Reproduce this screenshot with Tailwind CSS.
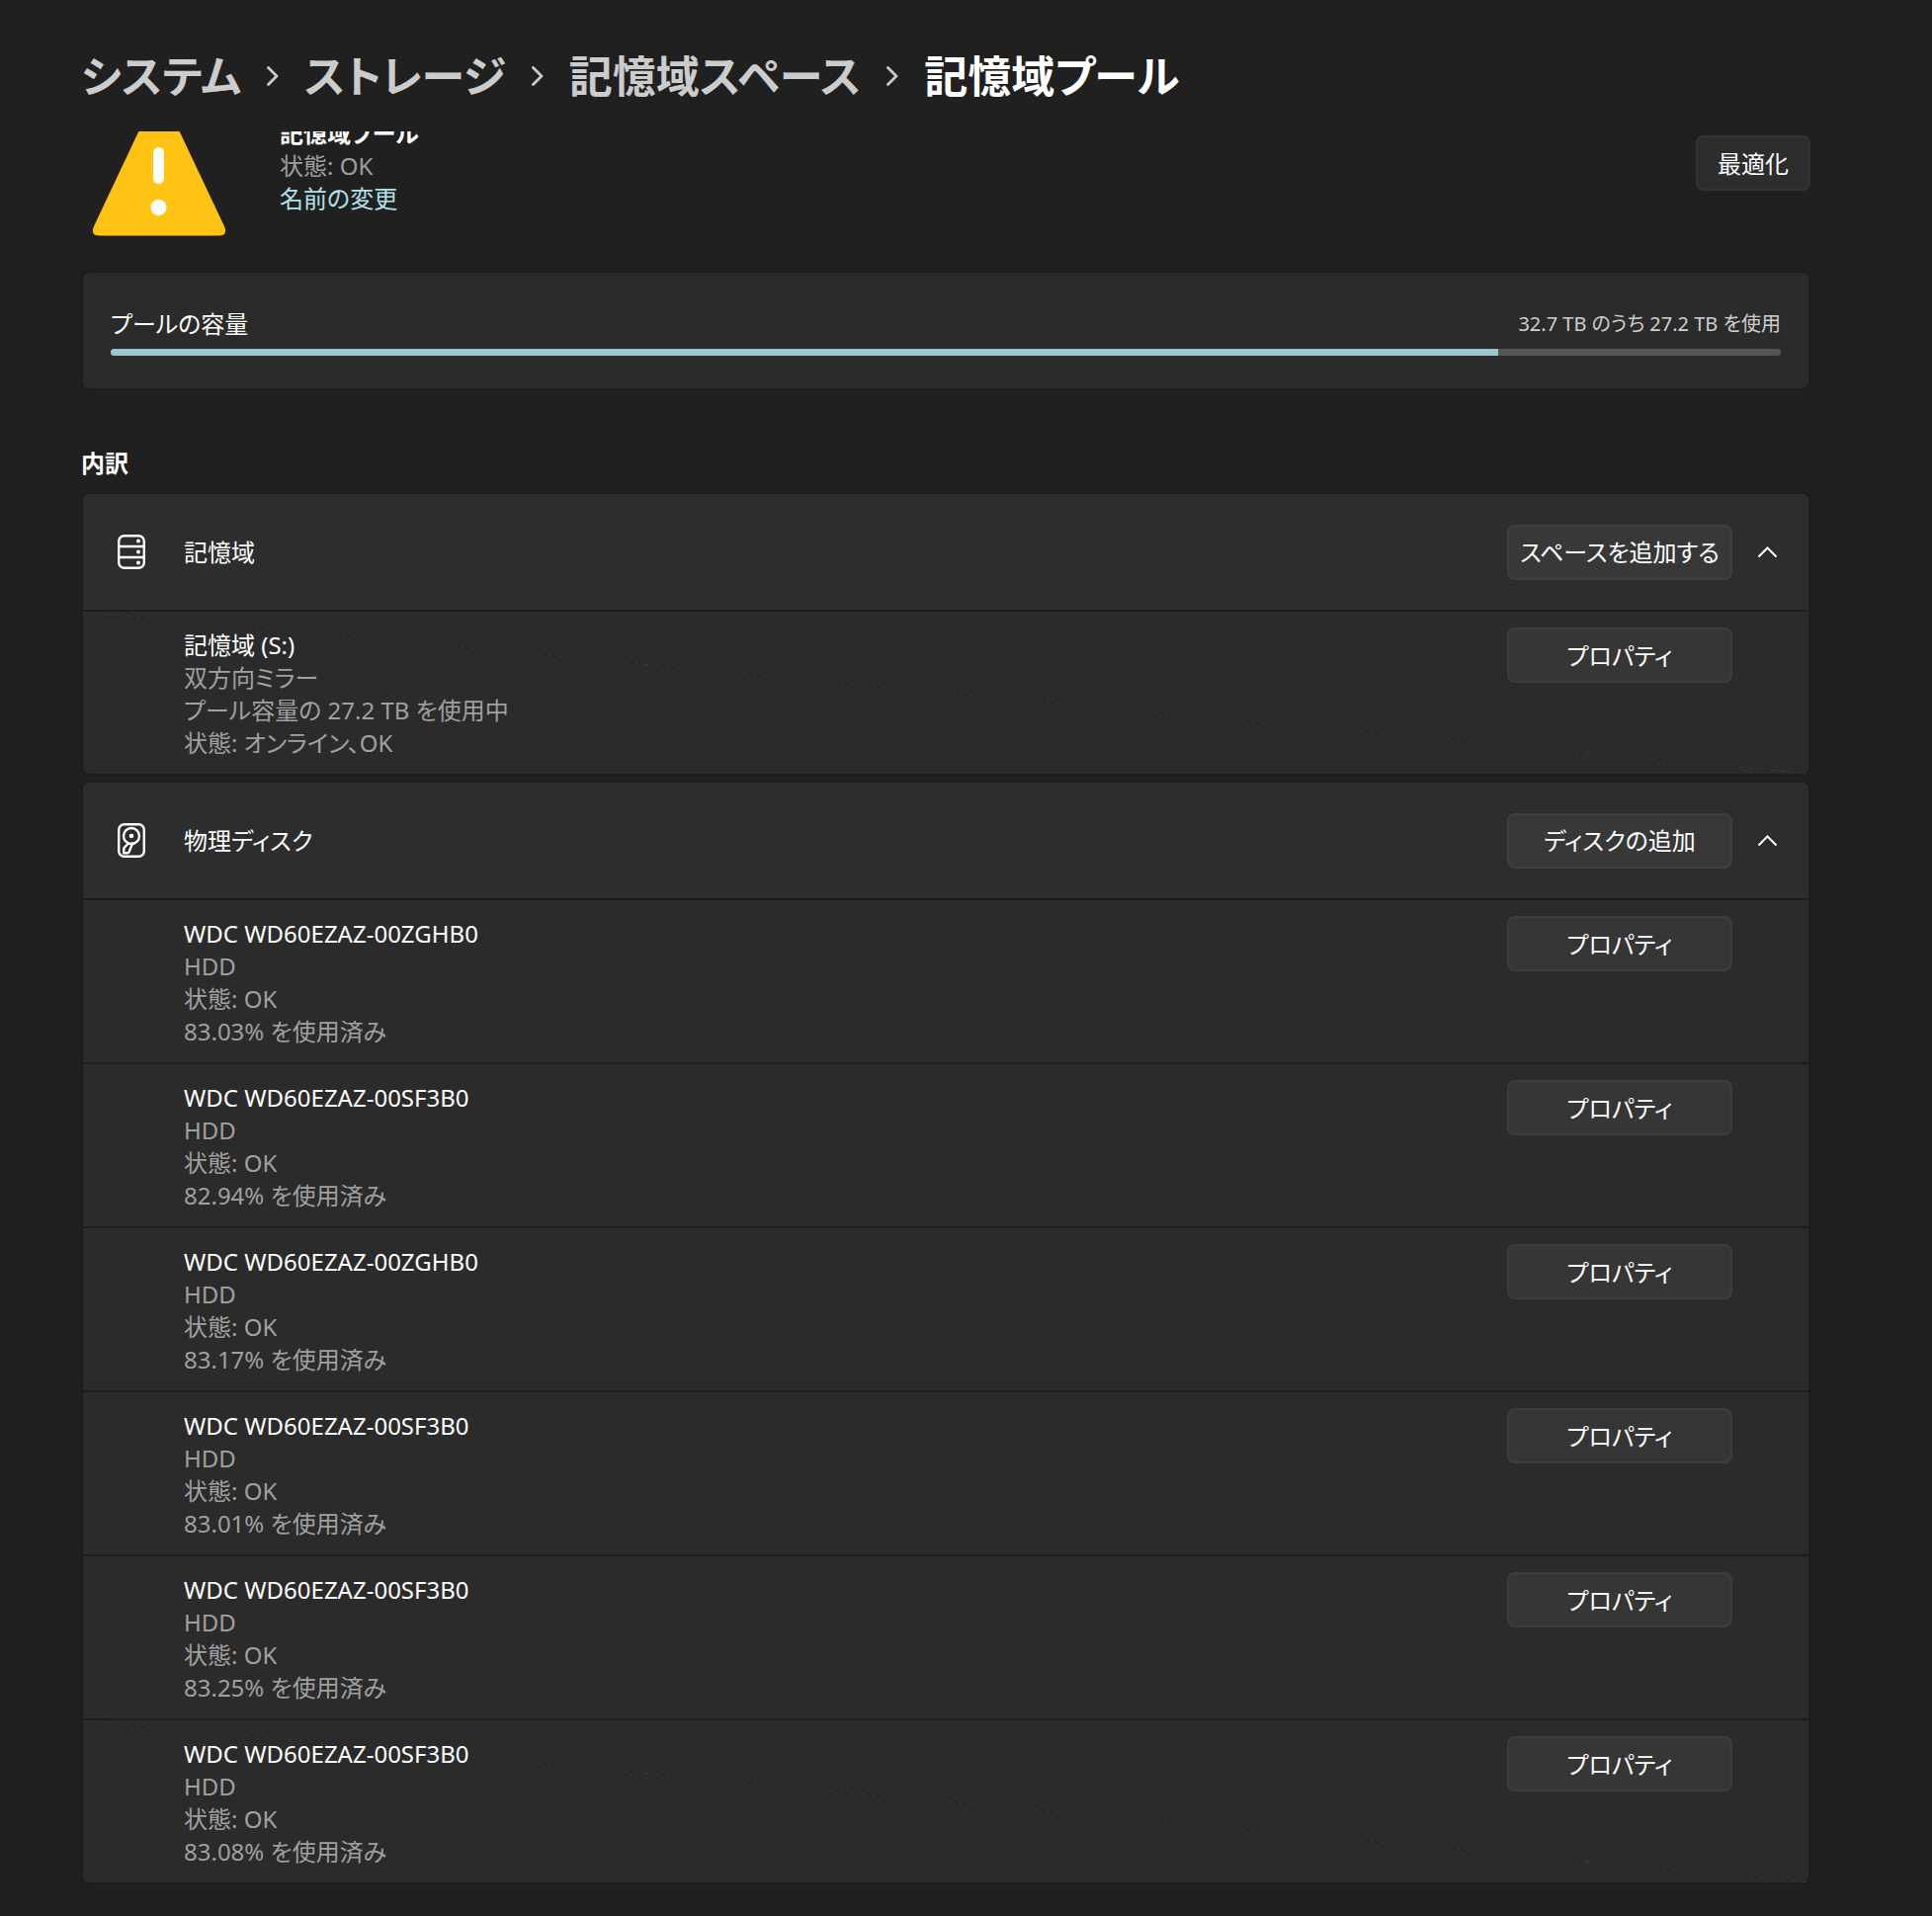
<!DOCTYPE html>
<html lang="ja">
  <head>
    <meta charset="UTF-8" />
    <meta name="viewport" content="width=device-width, initial-scale=1.0" />
    <title>記憶域プール</title>
    <script src="https://cdn.jsdelivr.net/npm/@tailwindcss/browser@4"></script>
  </head>
  <body class="min-h-screen bg-[#202020] pr-[123px] pl-[82px] font-['Noto_Sans','Noto_Sans_CJK_JP',sans-serif] text-[24px] leading-[33px] text-white [font-feature-settings:'palt']">

    <!-- breadcrumb -->
    <nav class="flex h-[133px] items-center pt-[20px] text-[44px] leading-[64px] font-semibold whitespace-nowrap text-[#cccccc]">
      <a href="#">システム</a>
      <svg class="mx-[26px] h-[20px] w-[12px]" fill="none" viewBox="0 0 12 20" stroke="currentColor" stroke-width="2.8" stroke-linecap="round" stroke-linejoin="round"><path d="M1.5 1.5 10 10 1.5 18.5" /></svg>
      <a href="#">ストレージ</a>
      <svg class="mx-[26px] h-[20px] w-[12px]" fill="none" viewBox="0 0 12 20" stroke="currentColor" stroke-width="2.8" stroke-linecap="round" stroke-linejoin="round"><path d="M1.5 1.5 10 10 1.5 18.5" /></svg>
      <a href="#">記憶域スペース</a>
      <svg class="mx-[26px] h-[20px] w-[12px]" fill="none" viewBox="0 0 12 20" stroke="currentColor" stroke-width="2.8" stroke-linecap="round" stroke-linejoin="round"><path d="M1.5 1.5 10 10 1.5 18.5" /></svg>
      <h1 class="text-white">記憶域プール</h1>
    </nav>

    <!-- scrolled content, cut off under the breadcrumb -->
    <main class="overflow-hidden">
      <div class="-mt-[15px] flex items-start">
        <svg class="mt-[1px] ml-[11px] h-[120px] w-[136px] overflow-visible" viewBox="0 0 136 120">
          <path d="M62-17Q68-25 74-17L134 110Q138 119.500 128 119.500H8Q-2 119.500 2 110Z" fill="#ffc314" />
          <rect x="62" y="30" width="11" height="37" rx="5.500" fill="#fff" />
          <circle cx="67.500" cy="91" r="8" fill="#fff" />
        </svg>
        <div class="ml-[54px] flex-1">
          <h2 class="font-bold">記憶域プール</h2>
          <p class="text-[#9e9e9e]">状態: OK</p>
          <a href="#" class="text-[#b3e0e8]">名前の変更</a>
        </div>
        <button class="mt-[19px] h-[56px] w-[116px] rounded-[8px] border-2 border-[#333333] bg-[#2d2d2d]">最適化</button>
      </div>

      <section class="mt-[35px] rounded-[8px] border-2 border-[#1d1d1d] bg-[#2b2b2b] px-[28px] pt-[35px] pb-[33px]">
        <div class="flex items-center justify-between">
          <p id="poolLabel">プールの容量</p>
          <p class="text-[20px] text-[#cfcfcf]">32.7 TB のうち 27.2 TB を使用</p>
        </div>
        <div role="progressbar" aria-labelledby="poolLabel" aria-valuenow="83" aria-valuemin="0" aria-valuemax="100" class="mt-[9px] h-[7px] overflow-hidden rounded-full bg-[#555555]">
          <div class="h-full bg-[#9ec5d0]" style="width: 83.1%"></div>
        </div>
      </section>

      <h2 class="mt-[57px] mb-[13px] font-bold">内訳</h2>

      <!-- storage spaces -->
      <section class="rounded-[8px] border-2 border-[#1d1d1d] bg-[#2b2b2b]">
        <div class="flex h-[117px] items-center rounded-t-[6px] bg-[#2d2d2d] pr-[32px] pl-[35px]">
          <svg class="h-[35px] w-[28px]" fill="none" viewBox="0 0 28 35" stroke="white" stroke-width="2.400">
            <rect x="1.200" y="1.200" width="25.600" height="32.600" rx="5.500" />
            <path d="M1 12H27M1 23H27" />
            <g fill="white" stroke="none"><circle cx="21" cy="6.500" r="2" /><circle cx="21" cy="17.500" r="2" /><circle cx="21" cy="28.500" r="2" /></g>
          </svg>
          <h3 class="ml-[39px] flex-1">記憶域</h3>
          <button class="h-[56px] w-[228px] rounded-[8px] border-2 border-[#3f3f3f] bg-[#383838]">スペースを追加する</button>
          <button aria-label="折りたたむ" class="ml-[26px]">
            <svg class="h-[12px] w-[19px]" fill="none" viewBox="0 0 19 12" stroke="white" stroke-width="2"><path d="M.5 10.500 9.500 1.500 18.500 10.500" /></svg>
          </button>
        </div>
        <div class="relative flex items-start border-t-2 border-[#1d1d1d] pt-[16px] pr-[77px] pb-[15px] pl-[102px]">
          <svg class="absolute inset-0 h-full w-full" preserveAspectRatio="none" viewBox="0 0 1746 164" shape-rendering="crispEdges"><path d="M0 0 1746 164" stroke="#3d3d3d" stroke-width="1" stroke-dasharray="2 9" /></svg>
          <div class="relative flex-1 pt-[1px] text-[#a0a0a0]">
            <h4 class="text-white">記憶域 (S:)</h4>
            <p>双方向ミラー</p>
            <p>プール容量の 27.2 TB を使用中</p>
            <p>状態: オンライン、OK</p>
          </div>
          <button class="relative h-[56px] w-[228px] rounded-[8px] border-2 border-[#3d3d3d] bg-[#363636]">プロパティ</button>
        </div>
      </section>

      <!-- physical disks -->
      <section class="mt-[5px] mb-[32px] rounded-[8px] border-2 border-[#1d1d1d] bg-[#2b2b2b]">
        <div class="flex h-[117px] items-center rounded-t-[6px] bg-[#2d2d2d] pr-[32px] pl-[35px]">
          <svg class="h-[35px] w-[28px]" fill="none" viewBox="0 0 28 35" stroke="white" stroke-width="2.400">
            <rect x="1.200" y="1.200" width="25.600" height="32.600" rx="5.500" />
            <circle cx="14" cy="13" r="8" />
            <path d="M15.500 19.500 11.500 29.300Q11 30.300 10 30.300H6.200V26.500Q6.200 25.500 7 24.500L11 20.500" stroke-linejoin="round" />
            <circle cx="14" cy="13" r="2.300" fill="white" stroke="none" />
          </svg>
          <h3 class="ml-[39px] flex-1">物理ディスク</h3>
          <button class="h-[56px] w-[228px] rounded-[8px] border-2 border-[#3f3f3f] bg-[#383838]">ディスクの追加</button>
          <button aria-label="折りたたむ" class="ml-[26px]">
            <svg class="h-[12px] w-[19px]" fill="none" viewBox="0 0 19 12" stroke="white" stroke-width="2"><path d="M.5 10.500 9.500 1.500 18.500 10.500" /></svg>
          </button>
        </div>
        <div id="diskList"></div>
      </section>
    </main>

    <script>
      const disks = [
        { name: 'WDC WD60EZAZ-00ZGHB0', used: '83.03%' },
        { name: 'WDC WD60EZAZ-00SF3B0', used: '82.94%' },
        { name: 'WDC WD60EZAZ-00ZGHB0', used: '83.17%' },
        { name: 'WDC WD60EZAZ-00SF3B0', used: '83.01%' },
        { name: 'WDC WD60EZAZ-00SF3B0', used: '83.25%' },
        { name: 'WDC WD60EZAZ-00SF3B0', used: '83.08%' },
      ]

      const seam = `<svg class="absolute inset-0 h-full w-full" preserveAspectRatio="none" viewBox="0 0 1746 164" shape-rendering="crispEdges"><path d="M0 0 1746 164" stroke="#3d3d3d" stroke-width="1" stroke-dasharray="2 9" /></svg>`

      disks.forEach((disk, i) => {
        diskList.innerHTML += `
          <div class="relative flex items-start border-t-2 border-[#1d1d1d] pt-[16px] pr-[77px] pb-[15px] pl-[102px]">
            ${i === disks.length - 1 ? seam : ''}
            <div class="relative flex-1 pt-[1px] text-[#a0a0a0]">
              <h4 class="text-white">${disk.name}</h4>
              <p>HDD</p>
              <p>状態: OK</p>
              <p>${disk.used} を使用済み</p>
            </div>
            <button class="relative h-[56px] w-[228px] rounded-[8px] border-2 border-[#3d3d3d] bg-[#363636]">プロパティ</button>
          </div>`
      })
    </script>
  </body>
</html>
